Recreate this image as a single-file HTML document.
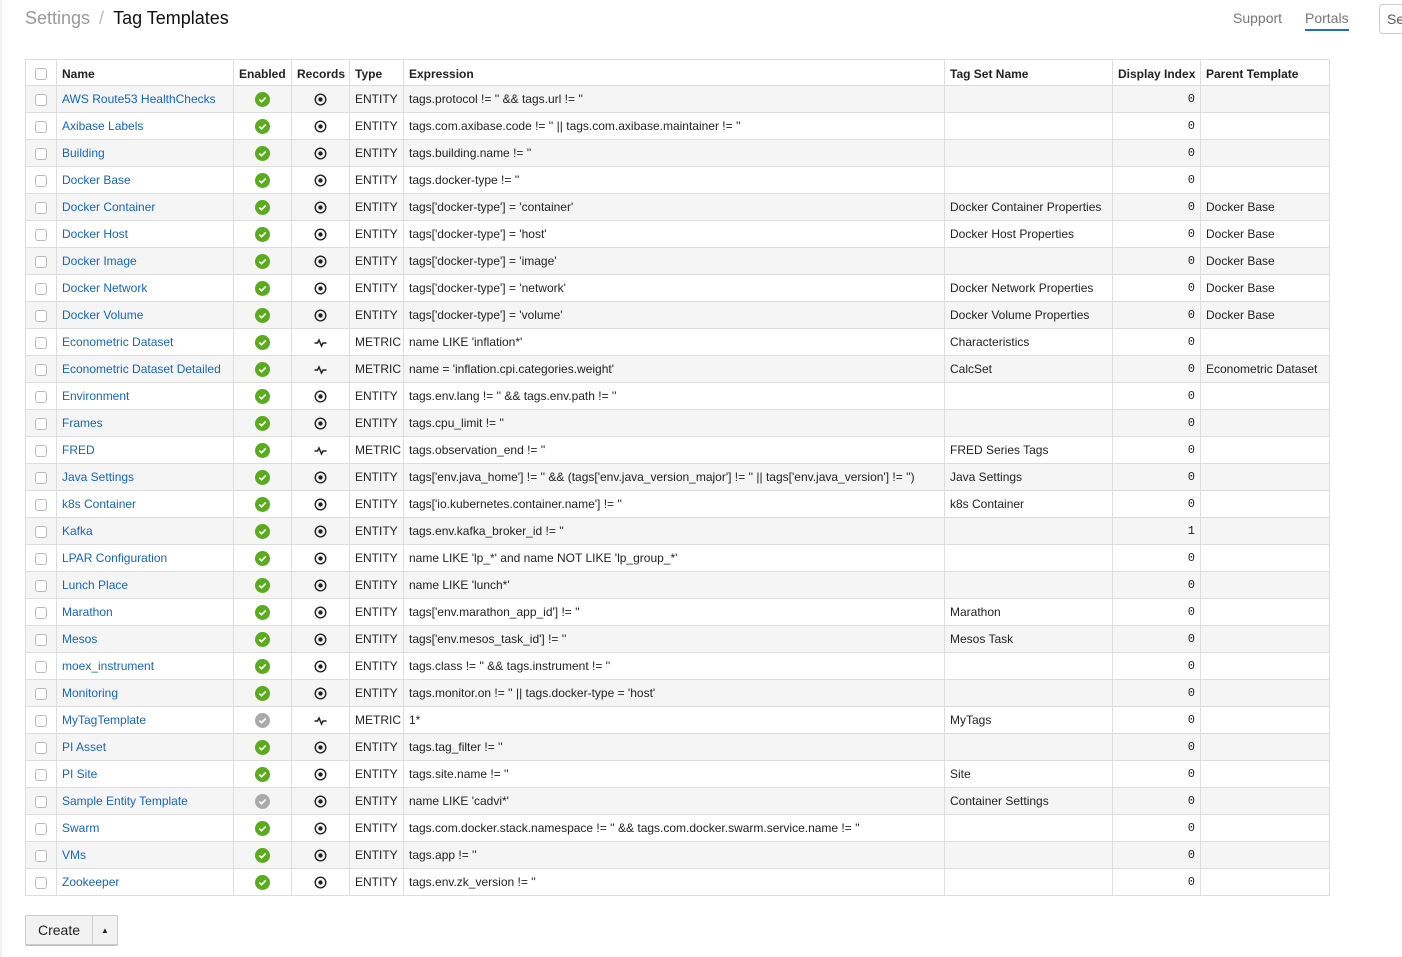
<!DOCTYPE html>
<html><head><meta charset="utf-8"><style>
*{box-sizing:border-box}
body{margin:0;width:1402px;height:957px;overflow:hidden;background:#fff;font-family:"Liberation Sans",sans-serif;font-size:12px;color:#222;position:relative}
.edge{position:absolute;left:0;top:0;width:2px;height:957px;background:#f0f0f0}
.crumb{position:absolute;left:25px;top:8px;font-size:18px;color:#999}
.crumb b{font-weight:normal;color:#111}
.crumb .sl{margin:0 9px;color:#bbb}
.nav{position:absolute;top:10px;font-size:14px;color:#777}
.portals{border-bottom:2px solid #1e6fc0;padding-bottom:3px}
.se{position:absolute;left:1379px;top:4px;width:40px;height:30px;border:1px solid #ccc;border-radius:4px;font-size:14px;color:#555;padding:6px 0 0 7px}
table{position:absolute;left:25px;top:59px;border-collapse:collapse;table-layout:fixed;width:1304px}
td,th{border:1px solid #ddd;height:27px;padding:0 5px;white-space:nowrap;overflow:hidden;text-align:left}
th{height:26px;font-weight:bold;font-size:12px;padding-top:2px}
thead tr{height:26px}
tbody tr:nth-child(odd){background:#f5f5f5}
a{color:#1565c0;text-decoration:none}
.c{text-align:center}
.r{text-align:right;font-family:"Liberation Mono",monospace}
.cb{display:inline-block;width:12px;height:12px;border:1px solid #bbb;border-radius:3px;background:#fff;vertical-align:middle}
svg{vertical-align:middle}
.btn{position:absolute;left:25px;top:915px;height:30px;border:1px solid #ccc;border-radius:2px;background:#f2f2f2;display:flex;align-items:center;font-size:14px;box-shadow:0 1px 0 #bbb}
.btn span{padding:0 12px}
.btn .ar{border-left:1px solid #ccc;height:100%;display:flex;align-items:center;padding:0 8px;font-size:8px}
</style></head><body>
<div class="edge"></div>
<div class="crumb">Settings<span class="sl">/</span><b>Tag Templates</b></div>
<div class="nav" style="left:1233px">Support</div>
<div class="nav portals" style="left:1305px">Portals</div>
<div class="se">Se</div>
<table>
<colgroup><col style="width:31px"><col style="width:177px"><col style="width:58px"><col style="width:58px"><col style="width:54px"><col style="width:541px"><col style="width:168px"><col style="width:88px"><col style="width:129px"></colgroup>
<thead><tr><th class="c"><span class="cb"></span></th><th>Name</th><th>Enabled</th><th>Records</th><th>Type</th><th>Expression</th><th>Tag Set Name</th><th>Display Index</th><th>Parent Template</th></tr></thead>
<tbody id="tb"></tbody>
</table>
<div class="btn"><span>Create</span><span class="ar">▲</span></div>
<script>
var G='<svg width="15" height="15" viewBox="0 0 15 15"><circle cx="7.5" cy="7.5" r="7.5" fill="#5aab1e"/><path d="M4.3 7.6l2.2 2.1 4.2-4.2" stroke="#fff" stroke-width="1.6" fill="none"/></svg>';
var Gr=G.replace('#5aab1e','#aaa');
var E='<svg width="13" height="13" viewBox="0 0 13 13"><circle cx="6.5" cy="6.5" r="5.3" stroke="#222" stroke-width="1.4" fill="none"/><circle cx="6.5" cy="6.5" r="2.2" fill="#222"/></svg>';
var M='<svg width="13" height="13" viewBox="0 0 13 13"><path d="M0.5 7h3l1.5-3 2.5 6 1.5-3h3.5" stroke="#222" stroke-width="1.5" fill="none"/></svg>';
var rows=[
["AWS Route53 HealthChecks",1,"E","tags.protocol != '' && tags.url != ''","","0",""],
["Axibase Labels",1,"E","tags.com.axibase.code != '' || tags.com.axibase.maintainer != ''","","0",""],
["Building",1,"E","tags.building.name != ''","","0",""],
["Docker Base",1,"E","tags.docker-type != ''","","0",""],
["Docker Container",1,"E","tags['docker-type'] = 'container'","Docker Container Properties","0","Docker Base"],
["Docker Host",1,"E","tags['docker-type'] = 'host'","Docker Host Properties","0","Docker Base"],
["Docker Image",1,"E","tags['docker-type'] = 'image'","","0","Docker Base"],
["Docker Network",1,"E","tags['docker-type'] = 'network'","Docker Network Properties","0","Docker Base"],
["Docker Volume",1,"E","tags['docker-type'] = 'volume'","Docker Volume Properties","0","Docker Base"],
["Econometric Dataset",1,"M","name LIKE 'inflation*'","Characteristics","0",""],
["Econometric Dataset Detailed",1,"M","name = 'inflation.cpi.categories.weight'","CalcSet","0","Econometric Dataset"],
["Environment",1,"E","tags.env.lang != '' && tags.env.path != ''","","0",""],
["Frames",1,"E","tags.cpu_limit != ''","","0",""],
["FRED",1,"M","tags.observation_end != ''","FRED Series Tags","0",""],
["Java Settings",1,"E","tags['env.java_home'] != '' && (tags['env.java_version_major'] != '' || tags['env.java_version'] != '')","Java Settings","0",""],
["k8s Container",1,"E","tags['io.kubernetes.container.name'] != ''","k8s Container","0",""],
["Kafka",1,"E","tags.env.kafka_broker_id != ''","","1",""],
["LPAR Configuration",1,"E","name LIKE 'lp_*' and name NOT LIKE 'lp_group_*'","","0",""],
["Lunch Place",1,"E","name LIKE 'lunch*'","","0",""],
["Marathon",1,"E","tags['env.marathon_app_id'] != ''","Marathon","0",""],
["Mesos",1,"E","tags['env.mesos_task_id'] != ''","Mesos Task","0",""],
["moex_instrument",1,"E","tags.class != '' && tags.instrument != ''","","0",""],
["Monitoring",1,"E","tags.monitor.on != '' || tags.docker-type = 'host'","","0",""],
["MyTagTemplate",0,"M","1*","MyTags","0",""],
["PI Asset",1,"E","tags.tag_filter != ''","","0",""],
["PI Site",1,"E","tags.site.name != ''","Site","0",""],
["Sample Entity Template",0,"E","name LIKE 'cadvi*'","Container Settings","0",""],
["Swarm",1,"E","tags.com.docker.stack.namespace != '' && tags.com.docker.swarm.service.name != ''","","0",""],
["VMs",1,"E","tags.app != ''","","0",""],
["Zookeeper",1,"E","tags.env.zk_version != ''","","0",""]];
var h='';
function esc(s){return s.replace(/&/g,'&amp;').replace(/</g,'&lt;')}
rows.forEach(function(r){h+='<tr><td class="c"><span class="cb"></span></td><td><a>'+r[0]+'</a></td><td class="c">'+(r[1]?G:Gr)+'</td><td class="c">'+(r[2]=="E"?E:M)+'</td><td>'+(r[2]=="E"?"ENTITY":"METRIC")+'</td><td>'+esc(r[3])+'</td><td>'+r[4]+'</td><td class="r">'+r[5]+'</td><td>'+r[6]+'</td></tr>'});
document.getElementById('tb').innerHTML=h;
</script>
</body></html>
